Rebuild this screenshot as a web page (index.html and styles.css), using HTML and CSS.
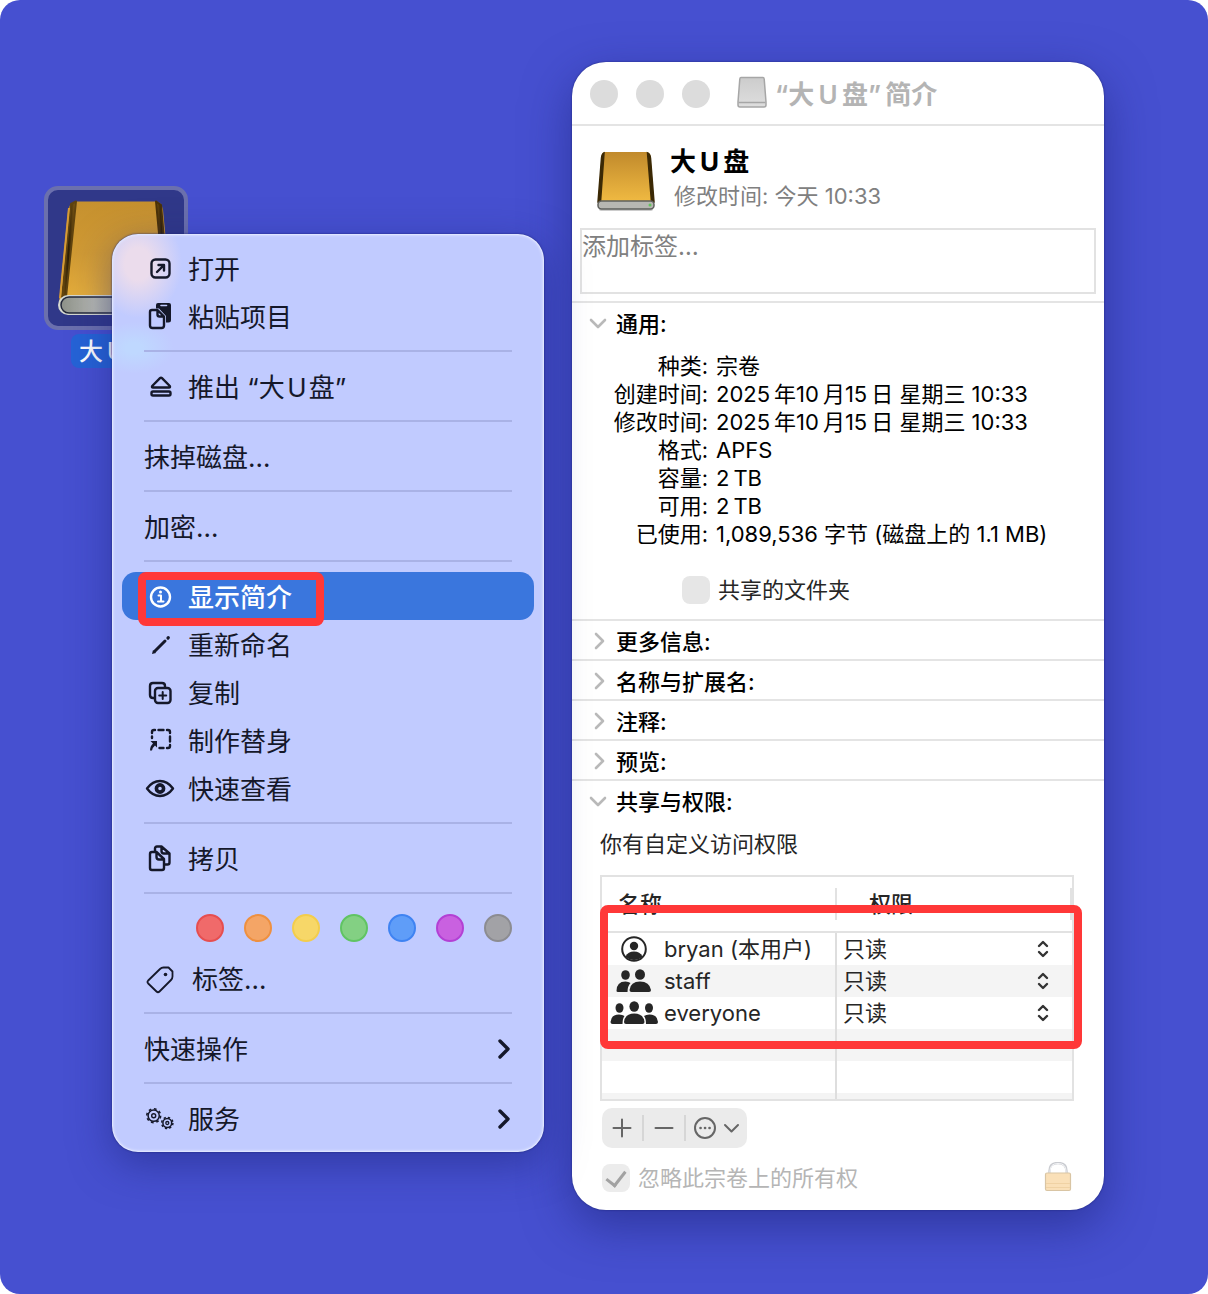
FILE: index.html
```html
<!DOCTYPE html>
<html lang="zh-CN">
<head>
<meta charset="utf-8">
<meta name="viewport" content="width=device-width, initial-scale=1">
<title>“大U盘”简介</title>
<link rel="stylesheet" href="styles.css">
</head>
<body>
<main class="desktop">

  <figure class="volume">
    <div class="volume-tile">
      <svg width="116" height="116" viewBox="0 0 116 116" aria-hidden="true">
        <defs>
          <linearGradient id="gold" x1="0" y1="0" x2="0" y2="1"><stop offset="0" stop-color="#c6912f"/><stop offset=".5" stop-color="#d09a34"/><stop offset="1" stop-color="#e8b03c"/></linearGradient>
          <linearGradient id="silver" x1="0" y1="0" x2="1" y2="0"><stop offset="0" stop-color="#8d9189"/><stop offset=".3" stop-color="#b6b8b0"/><stop offset="1" stop-color="#8f938c"/></linearGradient>
          <linearGradient id="spine" x1="0" y1="0" x2="1" y2="0"><stop offset="0" stop-color="#7a5513"/><stop offset=".45" stop-color="#2c1e05"/><stop offset="1" stop-color="#8a6118"/></linearGradient>
        </defs>
        <path d="M18 1.500H98Q104 2 105 10L114 104H1L10 10Q12 2 18 1.500Z" fill="url(#gold)"/>
        <path d="M13 4L18 1.500L8 97H4Z" fill="url(#spine)" stroke="#5f430f" stroke-width="2" stroke-linejoin="round"/>
        <path d="M98 1.500L103 5L111 97H107Z" fill="url(#spine)" stroke="#4a3208" stroke-width="2" stroke-linejoin="round"/>
        <path d="M11 8L2 98" stroke="#d79b35" stroke-width="2"/>
        <rect x="0" y="95" width="115" height="20" rx="10" fill="#d5d8d0"/>
        <rect x="3" y="97" width="109" height="16" rx="8" fill="url(#silver)" stroke="#23283a" stroke-width="1.500"/>
      </svg>
    </div>
    <figcaption class="volume-name">大&thinsp;U&thinsp;盘</figcaption>
  </figure>

  <nav class="menu" aria-label="快捷菜单">
    <button class="item" type="button">
      <svg class="icon" viewBox="0 0 32 32"><rect x="7.500" y="7.500" width="18" height="18" rx="4"/><path d="M13 20L19.500 13.500M14.500 13H20V18.500"/></svg>打开</button>
    <button class="item" type="button">
      <svg class="icon" viewBox="0 0 32 32"><path class="solid" d="M14 3H25Q27 3 27 5V20Q27 22.500 24.500 22.500H22V16L15 8.500H12V5Q12 3 14 3Z"/><path d="M17 5.500H22.500" stroke="#c1cbff" stroke-width="1.600"/><path d="M8 10H13.500L20 16.500V25.500Q20 28 17.500 28H8.500Q6 28 6 25.500V12Q6 10 8 10ZM13.500 10.500V14.500Q13.500 16.500 15.500 16.500H19.500"/></svg>粘贴项目</button>
    <hr class="rule">
    <button class="item" type="button">
      <svg class="icon" viewBox="0 0 32 32"><path d="M16 8.200Q17 7.200 18 8.200L25.800 16Q26.500 17.500 25 17.500H9Q7.500 17.500 8.200 16Z"/><rect x="7.500" y="21.500" width="19" height="4" rx="1.500"/></svg>推出 “大&hairsp;U&hairsp;盘”</button>
    <hr class="rule">
    <button class="item" type="button">抹掉磁盘…</button>
    <hr class="rule">
    <button class="item" type="button">加密…</button>
    <hr class="rule">
    <button class="item item-active" type="button">
      <svg class="icon" viewBox="0 0 32 32"><circle cx="16.500" cy="17" r="9.500"/><path d="M14.500 15.500H17V21.500M14 21.500H19.500" stroke-width="2"/><circle class="solid" cx="16.500" cy="12" r="1.500"/></svg>显示简介<span class="mark mark-item"></span></button>
    <button class="item" type="button">
      <svg class="icon" viewBox="0 0 32 32"><path d="M10.500 23.500L21 13" stroke-width="3"/><path class="solid" d="M8 26L9 22L12 25Z"/><path d="M24 10L24.300 9.700" stroke-width="3.200"/></svg>重新命名</button>
    <button class="item" type="button">
      <svg class="icon" viewBox="0 0 32 32"><path d="M10.500 22H9Q6 22 6 19V10Q6 7 9 7H18Q21 7 21 10V11.500"/><rect x="11" y="12" width="15.500" height="15" rx="3"/><path d="M18.700 16V23M15.200 19.500H22.200" stroke-width="2"/></svg>复制</button>
    <button class="item" type="button">
      <svg class="icon" viewBox="0 0 32 32"><path d="M8 9V8Q8 6 10 6H11M14.500 6H19.500M23 6H24Q26 6 26 8V9M26 12.500V17.500M26 21V22Q26 24 24 24H23M19.500 24H15.500M8 12.500V14"/><path class="solid" d="M6.500 17H13V23.500L11 21.500Q8.500 23.500 8 26.500H6Q6 22 9 19.500Z"/></svg>制作替身</button>
    <button class="item" type="button">
      <svg class="icon" viewBox="0 0 32 32"><path d="M3 16.500Q8.500 9 16 9Q23.500 9 29 16.500Q23.500 24 16 24Q8.500 24 3 16.500Z"/><circle cx="16" cy="16.500" r="3.600" stroke-width="3.600"/></svg>快速查看</button>
    <hr class="rule">
    <button class="item" type="button">
      <svg class="icon" viewBox="0 0 32 32"><path d="M8 10H12.500L20 17V26Q20 28 18 28H8Q6 28 6 26V12Q6 10 8 10ZM12.500 10V15Q12.500 17.500 15 17.500H20"/><path d="M11 9.500V6.500Q11 4.500 13 4.500H17.500L25.500 11.500V20.500Q25.500 22.500 23.500 22.500H21M17.500 4.500V9Q17.500 11.500 20 11.500H25"/></svg>拷贝</button>
    <hr class="rule">
    <div class="dots">
      <button class="dot red" type="button" aria-label="红色"></button>
      <button class="dot orange" type="button" aria-label="橙色"></button>
      <button class="dot yellow" type="button" aria-label="黄色"></button>
      <button class="dot green" type="button" aria-label="绿色"></button>
      <button class="dot blue" type="button" aria-label="蓝色"></button>
      <button class="dot purple" type="button" aria-label="紫色"></button>
      <button class="dot gray" type="button" aria-label="灰色"></button>
    </div>
    <button class="item item-tags" type="button">
      <svg class="icon" viewBox="0 0 32 32"><path stroke-width="1.800" d="M4.200 18.500L16 7Q17.500 5.500 19.500 5.500H24.500L28.500 9.500V14.500Q28.500 16.500 27 18L15.500 29.500Q14 31 12.500 29.500L4.200 21.500Q2.800 20 4.200 18.500Z"/><circle class="solid" cx="21.500" cy="12.500" r="1.800"/></svg>标签…</button>
    <hr class="rule">
    <button class="item" type="button">快速操作<svg class="more" viewBox="0 0 12 20"><path d="M2 2L10 10L2 18"/></svg></button>
    <hr class="rule">
    <button class="item" type="button">
      <svg class="icon" viewBox="0 0 32 32"><circle cx="9.700" cy="13.700" r="5.600" stroke-width="1.500"/><circle cx="9.700" cy="13.700" r="6.900" stroke-width="1.600" stroke-linecap="butt" stroke-dasharray="2.710 2.710"/><circle cx="9.700" cy="13.700" r="2" stroke-width="1.400"/><circle cx="23.300" cy="21" r="4.400" stroke-width="1.500"/><circle cx="23.300" cy="21" r="5.600" stroke-width="1.500" stroke-linecap="butt" stroke-dasharray="2.199 2.199"/><circle cx="23.300" cy="21" r="1.500" stroke-width="1.300"/></svg>服务<svg class="more" viewBox="0 0 12 20"><path d="M2 2L10 10L2 18"/></svg></button>
  </nav>

  <section class="window" aria-labelledby="window-title">
    <header class="titlebar">
      <div class="lights">
        <button class="light" type="button" aria-label="关闭"></button>
        <button class="light" type="button" aria-label="最小化"></button>
        <button class="light" type="button" aria-label="缩放"></button>
      </div>
      <svg class="proxy" width="30" height="32" viewBox="0 0 30 32" aria-hidden="true">
        <defs><linearGradient id="drive" x1="0" y1="0" x2="0" y2="1"><stop offset="0" stop-color="#ccc"/><stop offset="1" stop-color="#dedede"/></linearGradient></defs>
        <path d="M4 1.500H26Q27 1.500 27.200 3L29 26V29Q29 31 27 31H3Q1 31 1 29V26L2.800 3Q3 1.500 4 1.500Z" fill="url(#drive)" stroke="#a6a6a6" stroke-width="1.500"/>
        <path d="M1.500 26.500H28.500" stroke="#a6a6a6" stroke-width="1.500"/>
      </svg>
      <h1 class="title" id="window-title">“大&thinsp;U&thinsp;盘”&thinsp;简介</h1>
    </header>

    <div class="summary">
      <svg class="book" width="60" height="62" viewBox="0 0 60 62" aria-hidden="true">
        <defs><linearGradient id="cover" x1="0" y1="0" x2="0" y2="1"><stop offset="0" stop-color="#c18a2c"/><stop offset="1" stop-color="#f0ba42"/></linearGradient></defs>
        <rect x="3" y="56" width="54" height="5" rx="2" fill="#000" opacity=".2"/>
        <path d="M9 2H50Q54 2 54.500 6L58 52H2L5.500 6Q6 2 9 2Z" fill="url(#cover)"/>
        <path d="M8 3Q6 4 5.500 8L2 52H4.500Z M51.500 3Q54 4 54.500 8L58 52H55.500Z" fill="#3b2905" stroke="#3b2905" stroke-width="1.500"/>
        <rect x="2" y="51" width="56" height="8" rx="3.500" fill="#b7b7b2" stroke="#5f605c" stroke-width="1.500"/>
        <circle cx="54" cy="55" r="1.500" fill="#62c45c"/>
      </svg>
      <div class="summary-text">
        <h2 class="name">大&thinsp;U&thinsp;盘</h2>
        <p class="modified">修改时间: 今天 10:33</p>
      </div>
    </div>

    <textarea class="tags" aria-label="标签" placeholder="添加标签…"></textarea>

    <section class="section">
      <button class="section-head" type="button" aria-expanded="true"><svg class="twist" viewBox="0 0 20 20"><path d="M3 6L10 13L17 6"/></svg>通用:</button>
      <dl class="facts">
        <dt>种类:</dt><dd>宗卷</dd>
        <dt>创建时间:</dt><dd>2025&thinsp;年10&thinsp;月15&thinsp;日 星期三 10:33</dd>
        <dt>修改时间:</dt><dd>2025&thinsp;年10&thinsp;月15&thinsp;日 星期三 10:33</dd>
        <dt>格式:</dt><dd>APFS</dd>
        <dt>容量:</dt><dd>2&thinsp;TB</dd>
        <dt>可用:</dt><dd>2&thinsp;TB</dd>
        <dt>已使用:</dt><dd>1,089,536 字节 (磁盘上的 1.1 MB)</dd>
      </dl>
      <label class="check check-shared"><input class="box" type="checkbox">共享的文件夹</label>
    </section>
    <section class="section"><button class="section-head" type="button"><svg class="twist" viewBox="0 0 20 20"><path d="M8 2L15 9L8 16"/></svg>更多信息:</button></section>
    <section class="section"><button class="section-head" type="button"><svg class="twist" viewBox="0 0 20 20"><path d="M8 2L15 9L8 16"/></svg>名称与扩展名:</button></section>
    <section class="section"><button class="section-head" type="button"><svg class="twist" viewBox="0 0 20 20"><path d="M8 2L15 9L8 16"/></svg>注释:</button></section>
    <section class="section"><button class="section-head" type="button"><svg class="twist" viewBox="0 0 20 20"><path d="M8 2L15 9L8 16"/></svg>预览:</button></section>
    <section class="section">
      <button class="section-head" type="button" aria-expanded="true"><svg class="twist" viewBox="0 0 20 20"><path d="M3 6L10 13L17 6"/></svg>共享与权限:</button>
      <div class="sharing">
        <p class="access">你有自定义访问权限</p>
        <div class="table-wrap">
          <table class="table">
            <thead>
              <tr><th class="col-name" scope="col"><span>名称</span></th><th scope="col"><span>权限</span></th></tr>
            </thead>
            <tbody>
              <tr>
                <td><div class="user"><svg class="people" viewBox="0 0 48 28"><circle cx="24" cy="14" r="11.800" fill="none" stroke="#262626" stroke-width="2"/><circle cx="24" cy="11" r="4.200"/><path d="M15.500 21.500Q18 16.500 24 16.500Q30 16.500 32.500 21.500Q29 25 24 25Q19 25 15.500 21.500Z"/></svg>bryan (本用户)</div></td>
                <td><select class="select" aria-label="bryan 的权限"><option>只读</option></select></td>
              </tr>
              <tr>
                <td><div class="user"><svg class="people" viewBox="0 0 48 28"><ellipse cx="15.500" cy="8" rx="4.300" ry="4.800"/><path d="M6.500 24Q6.500 14.500 15.500 14.500Q18.500 14.500 20.500 16Q17.500 19 17.500 25H8Q6.500 25 6.500 24Z"/><ellipse cx="30" cy="7.500" rx="5" ry="5.300"/><path d="M19.500 23Q20.500 14.500 30 14.500Q39.500 14.500 41 23Q41 25 39 25H21.500Q19.500 25 19.500 23Z"/></svg>staff</div></td>
                <td><select class="select" aria-label="staff 的权限"><option>只读</option></select></td>
              </tr>
              <tr>
                <td><div class="user"><svg class="people" viewBox="0 0 48 28"><ellipse cx="9.500" cy="9" rx="4" ry="4.800"/><ellipse cx="39" cy="9" rx="4" ry="4.800"/><path d="M.5 23Q1 15.500 9 15.500Q12.500 15.500 14.500 17Q12.500 19.500 12.500 25H2.500Q.5 25 .5 23ZM48 23Q47.500 15.500 39.500 15.500Q36 15.500 34 17Q36 19.500 36 25H46Q48 25 48 23Z"/><ellipse cx="24.200" cy="7.500" rx="4.800" ry="5.200"/><path d="M14 23Q15 14.500 24.200 14.500Q33.500 14.500 34.500 23Q34.500 25 32.500 25H16Q14 25 14 23Z"/></svg>everyone</div></td>
                <td><select class="select" aria-label="everyone 的权限"><option>只读</option></select></td>
              </tr>
              <tr><td></td><td></td></tr>
              <tr><td></td><td></td></tr>
              <tr class="stub"><td></td><td></td></tr>
            </tbody>
          </table>
          <span class="mark mark-table"></span>
        </div>
        <div class="actions">
          <button class="action" type="button" aria-label="添加"><svg width="20" height="20" viewBox="0 0 20 20"><path d="M10 1.500V18.500M1.500 10H18.500"/></svg></button>
          <button class="action" type="button" aria-label="移除"><svg width="20" height="20" viewBox="0 0 20 20"><path d="M1.500 10H18.500"/></svg></button>
          <button class="action action-wide" type="button" aria-label="更多操作"><svg width="46" height="24" viewBox="0 0 46 24"><circle cx="11" cy="12" r="10"/><path d="M6.500 12H6.600M11 12H11.100M15.500 12H15.600" stroke-width="2.600"/><path d="M31 9L37.500 15.500L44 9"/></svg></button>
        </div>
        <div class="footer">
          <label class="check check-off"><input class="box" type="checkbox" checked disabled>忽略此宗卷上的所有权</label>
          <svg class="lock" width="28" height="32" viewBox="0 0 28 32" aria-hidden="true"><path d="M5.500 13V9Q5.500 1 14 1Q22.500 1 22.500 9V13" fill="none" stroke="#c9cbd0" stroke-width="2.400"/><path d="M6 13V9Q6 1.500 14 1.500Q22 1.500 22 9V13" fill="none" stroke="#f4f5f7" stroke-width="1"/><rect x="1.500" y="11" width="25" height="17.500" rx="1.500" fill="#fae0b8" stroke="#d9c5a4" stroke-width="1.200"/><path d="M2 21.500H26M2 25.500H26" stroke="#f0d2a4" stroke-width="1"/></svg>
        </div>
      </div>
    </section>
  </section>
</main>
</body>
</html>
```
FILE: styles.css
```css
* { box-sizing: border-box; }

body {
  margin: 0;
  background: #fff;
  color: #000;
  font-family: Inter, "Noto Sans CJK SC", sans-serif;
  font-size: 22px;
  line-height: 28px;
}

button, select, textarea { font: inherit; color: inherit; }
button { padding: 0; border: 0; background: none; text-align: left; }
h1, h2, p, dl, dd, figure { margin: 0; }

.desktop {
  position: relative;
  display: flex;
  justify-content: flex-end;
  align-items: flex-start;
  min-height: 100vh;
  padding: 62px 104px 84px;
  border-radius: 20px;
  background: #4650d0;
}

/* Volume on the desktop */
.volume {
  position: absolute;
  left: 44px;
  top: 186px;
  display: flex;
  flex-direction: column;
  align-items: center;
  gap: 4px;
}
.volume-tile {
  display: grid;
  place-items: center;
  width: 144px;
  height: 144px;
  border: 4px solid #6b70ad;
  border-radius: 14px;
  background: #303889;
}
.volume-name {
  padding: 2px 8px 0;
  border-radius: 8px;
  background: #2563d6;
  color: #fff;
  font-size: 24px;
  font-weight: 500;
  line-height: 32px;
}

/* Context menu */
.menu {
  position: absolute;
  left: 112px;
  top: 234px;
  width: 432px;
  padding: 10px;
  border-radius: 26px;
  background:
    radial-gradient(ellipse 44px 54px at 26px 30px, #ebdcec 30%, #ebdcec00 100%),
    radial-gradient(ellipse 40px 26px at 22px 114px, #bfd8ff 20%, #bfd8ff00 100%),
    #c1cbff;
  box-shadow: inset 0 0 0 1px #dfe5ff, inset 0 0 3px 1px #e6eaff, 0 0 2px #1c2478, 0 12px 40px #1c247880;
  color: #15182a;
  font-size: 26px;
}
.item {
  position: relative;
  display: flex;
  align-items: center;
  gap: 12px;
  width: 100%;
  height: 48px;
  padding: 4px 22px 0;
  border-radius: 14px;
}
.item-active { z-index: 1; background: #3a76dd; color: #fff; font-weight: 500; }
.item-tags { gap: 16px; }
.icon {
  flex: none;
  width: 32px;
  height: 32px;
  margin-top: -4px;
  fill: none;
  stroke: currentColor;
  stroke-width: 2.4;
  stroke-linecap: round;
  stroke-linejoin: round;
}
.icon .solid { fill: currentColor; stroke: none; }
.more {
  width: 12px;
  height: 20px;
  margin-top: -2px;
  margin-left: auto;
  margin-right: 2px;
  fill: none;
  stroke: currentColor;
  stroke-width: 3.4;
  stroke-linecap: round;
  stroke-linejoin: round;
}
.rule { height: 2px; margin: 10px 22px; border: 0; background: #a9b2e6; }
.dots { display: flex; align-items: center; justify-content: flex-end; gap: 20px; height: 50px; padding: 0 22px 2px; }
.dot { width: 28px; height: 28px; border: 2px solid; border-radius: 50%; }
.red { background: #f06a6a; border-color: #e64e50; }
.orange { background: #f4a566; border-color: #ee9040; }
.yellow { background: #f7d768; border-color: #f3cd4c; }
.green { background: #83d083; border-color: #60c463; }
.blue { background: #5f9df8; border-color: #3f83f2; }
.purple { background: #c961e0; border-color: #b340d4; }
.gray { background: #a2a2a6; border-color: #8c8c91; }

/* Red highlight frames */
.mark { position: absolute; border: 8px solid #ff3838; border-radius: 8px; pointer-events: none; }
.mark-item { left: 16px; top: 0; width: 186px; height: 54px; }
.mark-table { left: 0; right: -8px; top: 30px; height: 144px; }

/* Info window */
.window {
  flex: 0 1 532px;
  min-width: 0;
  border-radius: 34px;
  background: #fff;
  box-shadow: 0 0 2px #1c2478, 0 16px 48px #1c247890;
}
.titlebar {
  display: flex;
  align-items: center;
  height: 64px;
  padding: 2px 18px 0;
  border-bottom: 2px solid #e4e4e4;
}
.lights { display: flex; gap: 18px; margin-right: 27px; }
.light { width: 28px; height: 28px; border-radius: 50%; background: #dcdcdc; }
.proxy { margin: -4px 8px 0 0; }
.title { padding-top: 2px; color: #b4b4b4; font-size: 26px; font-weight: 600; line-height: 32px; }

.summary { display: flex; gap: 14px; padding: 24px 24px 16px; }
.book { flex: none; }
.summary-text { margin-top: -2px; }
.name { font-size: 26px; font-weight: 700; line-height: 28px; }
.modified { padding: 6px 4px 0; color: #808080; }

.tags {
  display: block;
  width: calc(100% - 16px);
  height: 66px;
  margin: 0 8px 7px;
  padding: 0;
  border: 2px solid #e2e2e2;
  outline: 0;
  background: none;
  resize: none;
  font-size: 24px;
  line-height: 34px;
}
.tags::placeholder { color: #808080; opacity: 1; }

.section { border-top: 2px solid #e4e4e4; }
.section-head {
  display: flex;
  align-items: center;
  gap: 8px;
  width: 100%;
  height: 38px;
  padding: 4px 16px 0;
  font-weight: 500;
}
.twist {
  flex: none;
  width: 20px;
  height: 20px;
  fill: none;
  stroke: #b9b9b9;
  stroke-width: 2.6;
  stroke-linecap: round;
  stroke-linejoin: round;
}
.facts {
  display: grid;
  grid-template-columns: 136px 1fr;
  column-gap: 8px;
  padding-top: 11px;
}
.facts dt { text-align: right; }

.check { display: flex; align-items: center; gap: 8px; color: #262626; }
.check-shared { padding: 28px 110px 15px; }
.check-off { color: #b5b5b5; }
.box {
  appearance: none;
  display: grid;
  place-items: center;
  width: 28px;
  height: 28px;
  margin: 0;
  border-radius: 8px;
  background: #e6e6e6;
}
.check-off .box { background: #ececec; }
.box:checked::before {
  content: "";
  width: 9px;
  height: 16px;
  margin-top: -4px;
  border: solid #a2a2a2;
  border-width: 0 3px 3px 0;
  transform: rotate(38deg);
}

.sharing { padding: 11px 30px 16px 28px; color: #262626; }
.access { padding-bottom: 17px; }
.table-wrap { position: relative; }
.table {
  width: 100%;
  table-layout: fixed;
  border: 2px solid #e2e2e2;
  border-collapse: separate;
  border-spacing: 0;
}
.table th {
  height: 56px;
  padding: 0;
  border-bottom: 2px solid #e2e2e2;
  font-weight: 500;
  text-align: left;
}
.table th span {
  display: block;
  height: 32px;
  padding: 2px 0 0 32px;
  border-right: 2px solid #e2e2e2;
}
.table .col-name { width: 235px; }
.table .col-name span { padding-left: 16px; }
.table td { height: 32px; padding: 0; }
.table td:first-child { border-right: 2px solid #dedede; }
.table tbody tr:nth-child(even) { background: #f4f4f4; }
.table .stub td { height: 6px; }
.user { display: flex; align-items: center; gap: 6px; padding-left: 8px; }
.people { flex: none; width: 48px; height: 28px; fill: #262626; }
.select {
  appearance: none;
  display: block;
  width: 100%;
  height: 32px;
  padding: 0 6px;
  border: 0;
  background: url("data:image/svg+xml,%3Csvg xmlns='http://www.w3.org/2000/svg' width='12' height='18' fill='none' stroke='%23333' stroke-width='2.400' stroke-linecap='round' stroke-linejoin='round'%3E%3Cpath d='M2 6L6 2L10 6M2 12L6 16L10 12'/%3E%3C/svg%3E") no-repeat right 23px center;
}

.actions {
  display: flex;
  align-items: center;
  width: fit-content;
  height: 40px;
  margin: 7px 0 0 2px;
  border-radius: 10px;
  background: #ebebeb;
}
.action { display: grid; place-items: center; width: 42px; height: 26px; border-right: 2px solid #d6d6d6; }
.action svg { fill: none; stroke: #666; stroke-width: 2; stroke-linecap: round; stroke-linejoin: round; }
.action-wide { width: 61px; border: 0; }
.footer { display: flex; align-items: center; justify-content: space-between; padding: 14px 2px 0; }
```
